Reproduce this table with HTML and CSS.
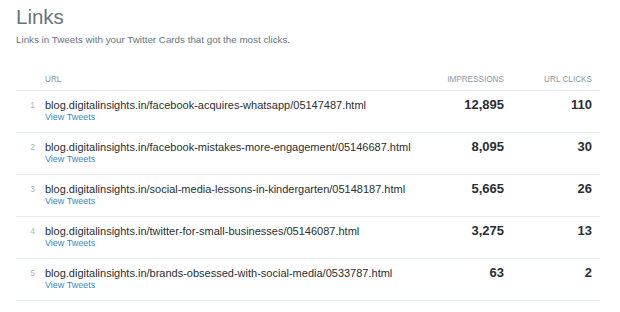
FILE: index.html
```html
<!DOCTYPE html>
<html>
<head>
  <title>Links</title>
  <meta name="viewport" content="width=device-width,initial-scale=1">
  <link rel="stylesheet" href="styles.css">
</head>
<body>
  <div class="links">
    <h1 class="links_title">Links</h1>
    <p class="links_sub">Links in Tweets with your Twitter Cards that got the most clicks.</p>

    <div class="links_table">
      <div class="row row-head">
        <div class="cell-num"></div>
        <div class="cell-url">URL</div>
        <div class="cell-imp">Impressions</div>
        <div class="cell-clk">URL Clicks</div>
      </div>

      <div class="row">
        <div class="cell-num">1</div>
        <div class="cell-url">
          <div class="url">blog.digitalinsights.in/facebook-acquires-whatsapp/05147487.html</div>
          <a class="view" href="#">View Tweets</a>
        </div>
        <div class="cell-imp">12,895</div>
        <div class="cell-clk">110</div>
      </div>

      <div class="row">
        <div class="cell-num">2</div>
        <div class="cell-url">
          <div class="url">blog.digitalinsights.in/facebook-mistakes-more-engagement/05146687.html</div>
          <a class="view" href="#">View Tweets</a>
        </div>
        <div class="cell-imp">8,095</div>
        <div class="cell-clk">30</div>
      </div>

      <div class="row">
        <div class="cell-num">3</div>
        <div class="cell-url">
          <div class="url">blog.digitalinsights.in/social-media-lessons-in-kindergarten/05148187.html</div>
          <a class="view" href="#">View Tweets</a>
        </div>
        <div class="cell-imp">5,665</div>
        <div class="cell-clk">26</div>
      </div>

      <div class="row">
        <div class="cell-num">4</div>
        <div class="cell-url">
          <div class="url">blog.digitalinsights.in/twitter-for-small-businesses/05146087.html</div>
          <a class="view" href="#">View Tweets</a>
        </div>
        <div class="cell-imp">3,275</div>
        <div class="cell-clk">13</div>
      </div>

      <div class="row">
        <div class="cell-num">5</div>
        <div class="cell-url">
          <div class="url">blog.digitalinsights.in/brands-obsessed-with-social-media/0533787.html</div>
          <a class="view" href="#">View Tweets</a>
        </div>
        <div class="cell-imp">63</div>
        <div class="cell-clk">2</div>
      </div>
    </div>
  </div>
</body>
</html>
```

FILE: styles.css
```css
html,
body {
  margin: 0;
  background: #fff;
  font-family: 'Liberation Sans', Arial, sans-serif;
  color: #292f33;
}

.links {
  padding: 4px 20px 0 16px;
}

.links_title {
  margin: 0;
  font-size: 20.5px;
  font-weight: 400;
  line-height: 26px;
  color: #66757f;
}

.links_sub {
  margin: 3px 0 0;
  font-size: 9.8px;
  line-height: 14px;
  color: #66757f;
}

.links_table {
  margin-top: 23px;
}

.row {
  display: grid;
  grid-template-columns: 29px minmax(0, 1fr) 100px 88px;
  align-items: start;
  padding: 7px 8px 0 0;
  border-bottom: 1px solid #e6ecf0;
  height: 34px;
}

.row-head {
  height: auto;
  padding: 3px 8px 4px 0;
  border-bottom: 1px solid #e1e8ed;
  font-size: 8.2px;
  line-height: 13px;
  text-transform: uppercase;
  color: #8899a6;
}

.cell-num {
  text-align: right;
  padding-right: 10px;
  font-size: 8.5px;
  line-height: 14px;
  color: #aab8c2;
}

.row-head .cell-num {
  padding: 0;
}

.cell-imp,
.cell-clk {
  text-align: right;
}

.row:not(.row-head) .cell-imp,
.row:not(.row-head) .cell-clk {
  font-size: 13px;
  line-height: 14px;
  font-weight: 700;
  color: #292f33;
}

.url {
  font-size: 11px;
  line-height: 14px;
  color: #292f33;
  white-space: nowrap;
}

.view {
  display: block;
  font-size: 9px;
  line-height: 11px;
  color: #3b88c3;
  text-decoration: none;
}
```
